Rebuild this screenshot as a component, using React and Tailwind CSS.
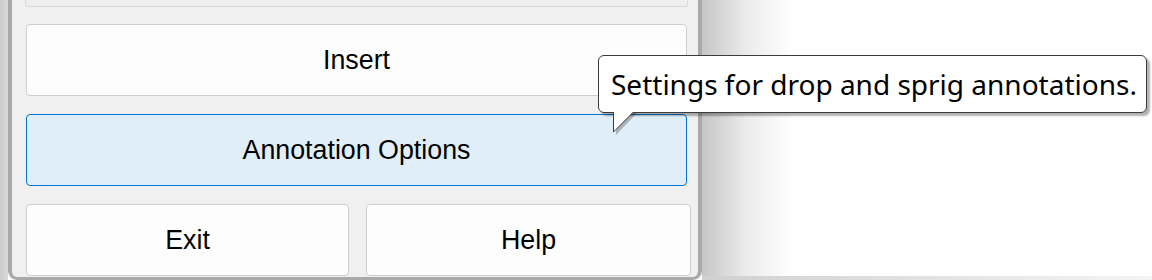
import React from 'react';

const btnBase =
  'flex items-center justify-center rounded-[4px] border text-[26.8px] text-black';

const Tooltip = () => (
  <div className="absolute left-[598px] top-[55px]">
    <div className="relative rounded-[6px] border border-[#3c3c3c] bg-white pl-[12px] pr-[9px] h-[58px] flex items-center shadow-[3px_3px_2px_rgba(0,0,0,0.3)]">
      <span
        className="whitespace-nowrap text-[28px] leading-none text-black"
        style={{ fontFamily: '"Noto Sans", "Open Sans", sans-serif' }}
      >
        Settings for drop and sprig annotations.
      </span>
    </div>
    {/* tail */}
    <svg
      className="absolute left-[15px] top-[56px]"
      width="28"
      height="24"
      viewBox="0 0 28 24"
    >
      <polygon points="3,2 3,24 24,2" fill="rgba(0,0,0,0.25)" />
      <polygon points="0.5,0 0.5,21 21,0" fill="#fff" />
      <polyline points="0.5,1 0.5,21 20,1.5" fill="none" stroke="#3c3c3c" strokeWidth="1" />
    </svg>
  </div>
);

export default function App() {
  return (
    <div
      className="relative h-[280px] w-[1152px] overflow-hidden bg-white flex"
      style={{ fontFamily: '"Liberation Sans", Arial, sans-serif' }}
    >
      {/* backdrop to the left */}
      <div className="w-[8px] h-full bg-gradient-to-r from-[#cbcbcb] to-[#d9d9d9]" />

      {/* window */}
      <div className="w-[694px] h-[280px] border-x-4 border-b-[3px] border-[#aaaaaa] rounded-b-[9px] bg-[#f0f0f0] pl-[14px] pr-[6px]">
        <div className="ml-[-1px] h-[7px] w-[663px] border-x border-b border-[#dadada] rounded-b-[3px] bg-[#efefef]" />
        <div className="mt-[17px] flex flex-col gap-[18px]">
          <button className={`${btnBase} h-[72px] w-[661px] border-[#cfcfcf] bg-[#fdfdfd]`}>
            Insert
          </button>
          <button className={`${btnBase} h-[72px] w-[661px] border-[#0078d4] bg-[#e0eef9]`}>
            Annotation Options
          </button>
          <div className="flex gap-[17px]">
            <button className={`${btnBase} h-[72px] w-[323px] border-[#cfcfcf] bg-[#fdfdfd]`}>
              Exit
            </button>
            <button className={`${btnBase} h-[72px] w-[325px] border-[#cfcfcf] bg-[#fdfdfd]`}>
              Help
            </button>
          </div>
        </div>
      </div>

      {/* window shadow */}
      <div className="flex-1 flex flex-col">
        <div className="flex-1 flex">
          <div className="w-[90px] h-full bg-gradient-to-r from-[#c6c6c6] via-[#ececec] to-white" />
          <div className="flex-1" />
        </div>
        <div className="h-[4px] bg-gradient-to-r from-[#d0d0d0] to-[#f4f4f4]" />
      </div>

      <Tooltip />
    </div>
  );
}
